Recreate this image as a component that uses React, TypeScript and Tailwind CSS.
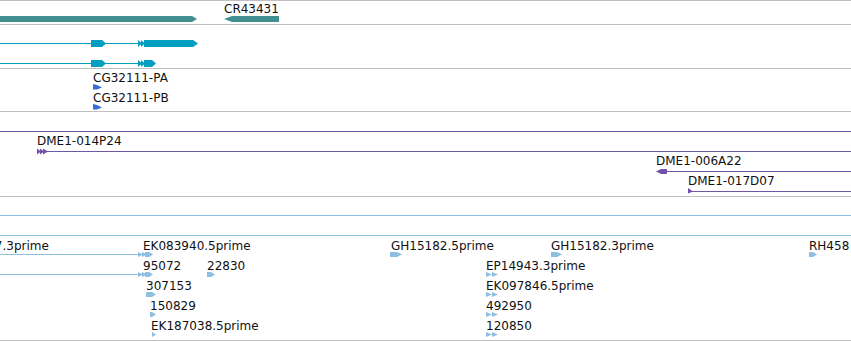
import type { ReactNode } from 'react';

type Label = { x: number; cap: number; text: string };

const TEAL = '#418f90';
const CYAN = '#049fc0';
const BLUE = '#3a6dd4';
const PURPLE = '#6f58a3';
const PURPLE_DARK = '#7450ab';
const EST = '#8ebee2';

// right-pointing block arrow from x1 to x2, centred on cy
function Right({ x1, x2, cy, h, tip, fill }: { x1: number; x2: number; cy: number; h: number; tip: number; fill: string }) {
  const t = cy - h / 2;
  const b = cy + h / 2;
  return <polygon points={`${x1},${t} ${x2 - tip},${t} ${x2},${cy} ${x2 - tip},${b} ${x1},${b}`} fill={fill} />;
}

function Left({ x1, x2, cy, h, tip, fill }: { x1: number; x2: number; cy: number; h: number; tip: number; fill: string }) {
  const t = cy - h / 2;
  const b = cy + h / 2;
  return <polygon points={`${x1},${cy} ${x1 + tip},${t} ${x2},${t} ${x2},${b} ${x1 + tip},${b}`} fill={fill} />;
}

function Tri({ x, cy, w, h, fill }: { x: number; cy: number; w: number; h: number; fill: string }) {
  return <polygon points={`${x},${cy - h / 2} ${x + w},${cy} ${x},${cy + h / 2}`} fill={fill} />;
}

function Line({ x1, x2, y, fill }: { x1: number; x2: number; y: number; fill: string }) {
  return <rect x={x1} y={y} width={x2 - x1} height={1} fill={fill} shapeRendering="crispEdges" />;
}

function Track({ y0, className, labels, children }: { y0: number; className: string; labels: Label[]; children: ReactNode }) {
  return (
    <div className={`relative overflow-hidden border-t border-[#c0c0c0] ${className}`}>
      <svg className="absolute inset-0 h-full w-full">
        <g transform={`translate(0 ${-y0})`}>{children}</g>
      </svg>
      {labels.map((l) => (
        <span
          key={l.text + l.x}
          className="absolute whitespace-nowrap text-[#111]"
          style={{ left: l.x, top: l.cap - 2 - y0 }}
        >
          {l.text}
        </span>
      ))}
    </div>
  );
}

const estRows = [254, 274, 294, 314, 334];

export default function App() {
  return (
    <div className="h-[341px] w-[851px] overflow-hidden bg-white font-['DejaVu_Sans',sans-serif] text-[12px] leading-[14px]">
      <Track y0={1} className="h-[24px]" labels={[{ x: 224, cap: 4, text: 'CR43431' }]}>
        <Right x1={0} x2={197} cy={19} h={6} tip={5} fill={TEAL} />
        <Left x1={224} x2={279} cy={19} h={6} tip={8} fill={TEAL} />
      </Track>

      <Track y0={25} className="h-[44px]" labels={[]}>
        <Line x1={0} x2={140} y={43} fill={CYAN} />
        <Right x1={91} x2={106} cy={43.5} h={7} tip={4} fill={CYAN} />
        <Tri x={138} cy={43.5} w={4} h={7} fill={CYAN} />
        <Tri x={141} cy={43.5} w={4} h={7} fill={CYAN} />
        <Right x1={144} x2={198} cy={43.5} h={7} tip={5} fill={CYAN} />

        <Line x1={0} x2={140} y={63} fill={CYAN} />
        <Right x1={91} x2={106} cy={63.5} h={7} tip={4} fill={CYAN} />
        <Tri x={138} cy={63.5} w={4} h={7} fill={CYAN} />
        <Tri x={141} cy={63.5} w={4} h={7} fill={CYAN} />
        <Right x1={144} x2={156} cy={63.5} h={7} tip={4} fill={CYAN} />
      </Track>

      <Track
        y0={69}
        className="h-[43px]"
        labels={[
          { x: 93, cap: 73, text: 'CG32111-PA' },
          { x: 93, cap: 93, text: 'CG32111-PB' },
        ]}
      >
        <polygon points="93,84 97,85 102,87.5 97,89.5 93,89.5" fill={BLUE} />
        <polygon points="93,104 97,105 102,107.5 97,109.5 93,109.5" fill={BLUE} />
      </Track>

      <Track
        y0={112}
        className="h-[85px]"
        labels={[
          { x: 37, cap: 136, text: 'DME1-014P24' },
          { x: 656, cap: 156, text: 'DME1-006A22' },
          { x: 688, cap: 176, text: 'DME1-017D07' },
        ]}
      >
        <Line x1={0} x2={851} y={131} fill={PURPLE} />
        <Line x1={40} x2={851} y={151} fill={PURPLE} />
        <Tri x={37} cy={151.5} w={4} h={6} fill={PURPLE_DARK} />
        <Tri x={40} cy={151.5} w={4} h={6} fill={PURPLE_DARK} />
        <Tri x={43} cy={151.5} w={5} h={6} fill={PURPLE_DARK} />
        <Line x1={660} x2={851} y={171} fill={PURPLE} />
        <Left x1={656} x2={667} cy={171.5} h={5} tip={5} fill={PURPLE_DARK} />
        <Line x1={690} x2={851} y={191} fill={PURPLE} />
        <polygon points="688,188 693,191.5 688,193.5" fill={PURPLE_DARK} />
      </Track>

      <Track
        y0={197}
        className="h-[145px] border-b"
        labels={[
          { x: -54, cap: 241, text: 'GH04417.3prime' },
          { x: 143, cap: 241, text: 'EK083940.5prime' },
          { x: 391, cap: 241, text: 'GH15182.5prime' },
          { x: 551, cap: 241, text: 'GH15182.3prime' },
          { x: 809, cap: 241, text: 'RH458' },
          { x: 143, cap: 261, text: '95072' },
          { x: 207, cap: 261, text: '22830' },
          { x: 486, cap: 261, text: 'EP14943.3prime' },
          { x: 146, cap: 281, text: '307153' },
          { x: 486, cap: 281, text: 'EK097846.5prime' },
          { x: 150, cap: 301, text: '150829' },
          { x: 486, cap: 301, text: '492950' },
          { x: 151, cap: 321, text: 'EK187038.5prime' },
          { x: 486, cap: 321, text: '120850' },
        ]}
      >
        <Line x1={0} x2={851} y={215} fill={EST} />
        <Line x1={0} x2={851} y={235} fill={EST} />

        {[254, 274].map((y) => (
          <g key={y}>
            <Line x1={0} x2={140} y={y} fill={EST} />
            <Tri x={138} cy={y + 0.5} w={5} h={5} fill={EST} />
            <Tri x={142} cy={y + 0.5} w={5} h={5} fill={EST} />
            <Right x1={145} x2={153} cy={y + 0.5} h={5} tip={4} fill={EST} />
          </g>
        ))}

        <Right x1={390} x2={402} cy={254.5} h={5} tip={5} fill={EST} />
        <Right x1={551} x2={562} cy={254.5} h={5} tip={5} fill={EST} />
        <Right x1={809} x2={817} cy={254.5} h={5} tip={4} fill={EST} />
        <Right x1={207} x2={215} cy={274.5} h={5} tip={4} fill={EST} />
        <Right x1={146} x2={156} cy={294.5} h={5} tip={4} fill={EST} />
        <Right x1={150} x2={156} cy={314.5} h={5} tip={4} fill={EST} />
        <Tri x={152} cy={334.5} w={4} h={5} fill={EST} />

        {estRows.slice(1).map((y) => (
          <g key={y}>
            <Tri x={486} cy={y + 0.5} w={6} h={5} fill={EST} />
            <Tri x={492} cy={y + 0.5} w={6} h={5} fill={EST} />
          </g>
        ))}
      </Track>
    </div>
  );
}
